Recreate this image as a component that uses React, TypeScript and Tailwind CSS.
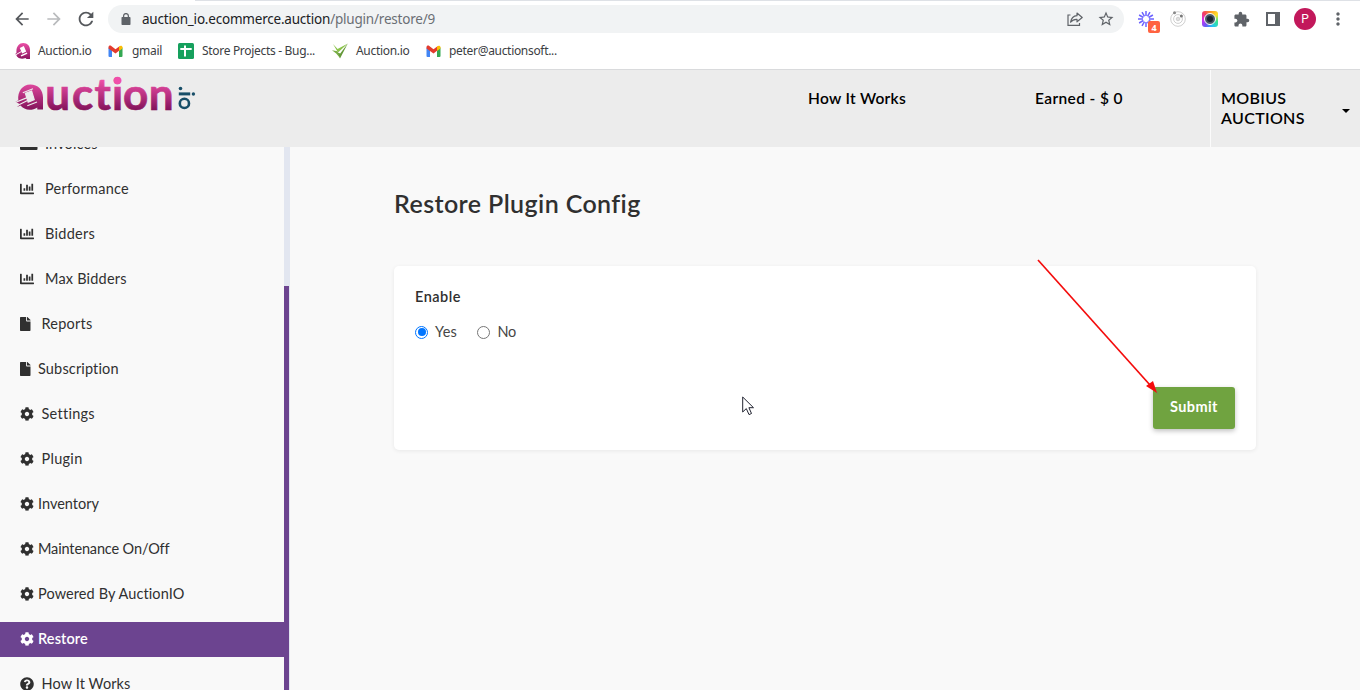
import type { ReactNode } from "react";
import { FaChartBar, FaCog, FaFile, FaQuestionCircle } from "react-icons/fa";
import { MdArrowBack, MdArrowForward, MdExtension, MdMoreVert, MdRefresh, MdStarBorder } from "react-icons/md";

function Gmail() {
  return (
    <svg className="h-[12px] w-[15px] shrink-0" viewBox="0 0 15 12">
      <path d="M0.5 2.5L4 5V12H1.5Q.5 12 .5 11Z" fill="#4285f4" />
      <path d="M11 5L14.5 2.5V11Q14.5 12 13.5 12H11Z" fill="#34a853" />
      <path d="M.5 2.2C.5.5 2.2.2 3.3 1L7.5 4.2L11.5 1.2L11 5.7L7.5 8.5L.5 3.6Z" fill="#e33b2e" />
      <path d="M11 1.5C12.5 .2 14.5.6 14.5 2.3V3.5L11 6Z" fill="#fbbc04" />
    </svg>
  );
}

function AuctionFavicon() {
  return (
    <svg className="h-[16px] w-[16px] shrink-0" viewBox="0 0 16 16">
      <defs>
        <linearGradient id="fav" x1="0" y1="0" x2="0" y2="1">
          <stop offset="0" stopColor="#ec4fa6" />
          <stop offset="1" stopColor="#8d1560" />
        </linearGradient>
      </defs>
      <path d="M8.2 0C12.5 0 15 3 15 7V16H11.5L10.5 15C5.5 17 1.5 14.5 1 11L-.3 11.6L1.5 9.7C.8 4 4 0 8.2 0Z" fill="url(#fav)" />
      <path d="M4.8 4.9L8.8 3.1L11.2 8.6L7.2 10.4Z M5.7 12.2L11.8 9.5L12.4 10.8L6.3 13.5Z M.8 11.2L6 8.3L6.4 9.1L1.3 12Z" fill="#fff" />
    </svg>
  );
}

function LogoArt() {
  return (
    <svg className="block h-[64px] w-[184px]" viewBox="14 70 184 64">
      <defs>
        <linearGradient id="brand" gradientUnits="userSpaceOnUse" x1="0" y1="80" x2="0" y2="110">
          <stop offset="0" stopColor="#ee4fa8" />
          <stop offset="1" stopColor="#83135a" />
        </linearGradient>
      </defs>
      <path d="M30.3 84.5C38 84.5 43 89.6 43 97.5V109.5H37.3V107.4C31.5 111.2 24 110 20.5 105.5L17 107L20 104.2L15.5 101.8L18.3 100.2C17.3 91.5 22.5 84.5 30.3 84.5Z" fill="url(#brand)" />
      <g fill="none" stroke="#ececec" strokeWidth="1.2">
        <path d="M25.4 93.3L31.6 91.1L34.2 99.6L28.2 102.1Z" fill="#ececec" />
        <path d="M22.8 92.7L33 88.8M27.3 105.8L37 102M14.5 102.7L27.2 97.6M17 105.8L28 100.2" />
      </g>
      <text x="45.2 71.9 94.6 112.1 123.1 148.8" y="110" fill="url(#brand)" stroke="url(#brand)" strokeWidth=".7" className="font-['Lato',sans-serif] text-[44px] font-bold">uction</text>
      <circle cx="117.2" cy="80.6" r="3.6" fill="#f04faa" />
      <g fill="#174e68">
        <circle cx="180.5" cy="88.5" r="1.8" />
        <rect x="178.8" y="92.4" width="11.4" height="3" />
        <circle cx="193.4" cy="94" r="1.7" />
      </g>
      <circle cx="184.4" cy="103.4" r="4.6" fill="none" stroke="#174e68" strokeWidth="2.6" />
    </svg>
  );
}

function Bookmark({ icon, className, children }: { icon: ReactNode; className: string; children: ReactNode }) {
  return (
    <div className={"flex items-center whitespace-nowrap " + className}>
      {icon}
      <span>{children}</span>
    </div>
  );
}

function BrowserBar() {
  return (
    <div className="h-[70px] shrink-0 border-b border-[#d9dadc] bg-white font-['Noto_Sans',sans-serif] text-[#3c4043]">
      <div className="ml-[195px] h-px bg-[#dee1e6]" />
      <div className="flex h-[36px] items-center pl-[12px]">
        <MdArrowBack className="size-[20px] text-[#55585c]" />
        <MdArrowForward className="ml-[12px] size-[20px] text-[#b9bbbd]" />
        <MdRefresh className="ml-[11px] size-[22px] text-[#55585c]" />
        <div className="ml-[11px] flex h-[28px] w-[1016px] items-center rounded-full bg-[#f1f3f4] pr-[9px] pl-[13px]">
          <svg className="h-[12px] w-[10px]" viewBox="0 0 10 12">
            <path d="M1.2 4H8.8Q9.5 4 9.5 4.8V11.2Q9.5 12 8.8 12H1.2Q.5 12 .5 11.2V4.8Q.5 4 1.2 4Z" fill="#5f6368" />
            <path d="M2.6 4.5V3A2.4 2.4 0 0 1 7.4 3V4.5" fill="none" stroke="#5f6368" strokeWidth="1.3" />
          </svg>
          <div className="ml-[11px] text-[13.5px] tracking-[-0.207px] whitespace-nowrap text-[#202124]">
            auction_io.ecommerce.auction<span className="text-[#6b6f74]">/plugin/restore/9</span>
          </div>
          <svg className="ml-auto size-[16px]" viewBox="0 0 16 16" fill="none" stroke="#5f6368" strokeWidth="1.2">
            <path d="M3.5 4H1V14.3H12.5V12" />
            <path d="M10 2L15.2 6.5L10 10.8V8.3C7.2 8.1 5.3 9 3.6 11.2C4.2 7.5 6.2 5 10 4.7Z" strokeLinejoin="round" />
          </svg>
          <MdStarBorder className="ml-[14px] size-[18px] text-[#5f6368]" />
        </div>
        <div className="relative ml-[14px] size-[16px]">
          <svg className="size-[16px]" viewBox="-8 -8 16 16" stroke="#6c63ff" strokeWidth="1.5">
            <path d="M0-3V-8M0 3V8M-3 0H-8M3 0H8M1.5-2.6L4-6.9M-1.5-2.6L-4-6.9M2.6-1.5L6.9-4M-2.6-1.5L-6.9-4M1.5 2.6L4 6.9M-1.5 2.6L-4 6.9M2.6 1.5L6.9 4M-2.6 1.5L-6.9 4" />
          </svg>
          <span className="absolute top-[10px] left-[10px] flex h-[12px] w-[12px] items-center justify-center rounded-[2px] bg-[#ff6240] text-[9px] leading-none font-bold text-white">4</span>
        </div>
        <svg className="ml-[16px] size-[16px]" viewBox="0 0 16 16" fill="none" stroke="#cfcfcf">
          <circle cx="8" cy="8" r="7.3" />
          <circle cx="8" cy="8" r="4.4" />
          <circle cx="8" cy="8" r="1.8" fill="#dedede" />
          <circle cx="4.5" cy="1.8" r="1.5" fill="#888" stroke="none" />
          <circle cx="11.4" cy="5" r="1.5" fill="#777" stroke="none" />
        </svg>
        <div className="ml-[16px] flex size-[16px] items-center justify-center rounded-[3px] bg-[conic-gradient(from_-45deg,#f43f5e,#ff9c20,#ffe12b,#37e58f,#22c7f5,#6957f5,#d42cf0,#f43f5e)]">
          <div className="size-[12px] rounded-full border-[1.5px] border-white bg-[#4a5968] p-[2px]">
            <div className="size-full rounded-full bg-[#1b2733]" />
          </div>
        </div>
        <MdExtension className="ml-[15px] size-[17px] text-[#5f6368]" />
        <svg className="ml-[16px] h-[14px] w-[14px]" viewBox="0 0 14 14">
          <path d="M1 1H13V13H1Z" fill="#fff" stroke="#5f6368" strokeWidth="2" />
          <path d="M9 0H14V14H9Z" fill="#5f6368" />
        </svg>
        <div className="ml-[14px] flex size-[22px] items-center justify-center rounded-full bg-[#c2185b] font-['Roboto',sans-serif] text-[12px] text-white">P</div>
        <MdMoreVert className="ml-[12px] size-[20px] text-[#5f6368]" />
      </div>
      <div className="flex h-[28px] items-center pl-[15px] text-[12px] tracking-[-0.31px]">
        <Bookmark icon={<AuctionFavicon />} className="w-[93px] gap-[7px]">Auction.io</Bookmark>
        <Bookmark icon={<Gmail />} className="w-[70px] gap-[9px]">gmail</Bookmark>
        <Bookmark
          className="w-[154px] gap-[8px]"
          icon={
            <svg className="size-[16px] shrink-0" viewBox="0 0 16 16">
              <rect width="16" height="16" rx="1.5" fill="#16a05d" />
              <path d="M2.3 6H13.7M7 2.5V13.5" stroke="#fff" strokeWidth="2" />
            </svg>
          }
        >
          Store Projects - Bug...
        </Bookmark>
        <Bookmark
          className="w-[94px] gap-[8px]"
          icon={
            <svg className="size-[16px] shrink-0" viewBox="0 0 16 16">
              <path d="M1 1L5.6 6L15.8 .5L6 9.4Z" fill="#8bc34a" />
              <path d="M15.8 .5L8 15.6L5 9.2L8.2 10.5Z" fill="#65993a" />
              <path d="M0 7.2L5.5 8.3L8 15L4.2 10.4Z" fill="#78ad45" />
            </svg>
          }
        >
          Auction.io
        </Bookmark>
        <Bookmark icon={<Gmail />} className="gap-[8px]">peter@auctionsoft...</Bookmark>
      </div>
    </div>
  );
}

function SiteHeader() {
  return (
    <header className="flex h-[77px] shrink-0 bg-[#ececec] text-[15.5px] leading-[20px] font-semibold text-black">
      <div className="w-[808px] pl-[14px]"><LogoArt /></div>
      <div className="w-[227px] pt-[18px] tracking-[0.29px]">How It Works</div>
      <div className="w-[175px] pt-[18px] tracking-[0.38px]">Earned - $ 0</div>
      <div className="flex flex-1 border-l border-[#fbfbfb] pl-[10px]">
        <div className="w-[121px] pt-[18px] text-[16px] tracking-[0.32px]">MOBIUS<br />AUCTIONS</div>
        <svg className="mt-[39px] h-[4px] w-[8px]" viewBox="0 0 8 4"><path d="M0 0H8L4 4Z" /></svg>
      </div>
    </header>
  );
}

const menu = [
  { icon: "chart", label: "Performance", text: "pl-[11px] tracking-[0.25px]" },
  { icon: "chart", label: "Bidders", text: "pl-[11px] tracking-[0.27px]" },
  { icon: "chart", label: "Max Bidders", text: "pl-[11px] tracking-[0.2px]" },
  { icon: "file", label: "Reports", text: "pl-[11px] tracking-[0.23px]" },
  { icon: "file", label: "Subscription", text: "pl-[7.5px] tracking-[0.15px]" },
  { icon: "cog", label: "Settings", text: "pl-[7.5px] tracking-[0.27px]" },
  { icon: "cog", label: "Plugin", text: "pl-[7.5px] tracking-[0.29px]" },
  { icon: "cog", label: "Inventory", text: "pl-[4px] tracking-[0.01px]" },
  { icon: "cog", label: "Maintenance On/Off", text: "pl-[4px] tracking-[-0.14px]" },
  { icon: "cog", label: "Powered By AuctionIO", text: "pl-[4px] tracking-[0.1px]" },
  { icon: "cog", label: "Restore", text: "pl-[4px] tracking-[0.1px]", active: true },
  { icon: "help", label: "How It Works", text: "pl-[7.5px] tracking-[0.11px]" },
];

function MenuIcon({ name }: { name: string }) {
  if (name === "chart") return <FaChartBar className="size-[14px] shrink-0" />;
  if (name === "file") return <FaFile className="h-[14px] w-[10.5px] shrink-0" />;
  if (name === "help") return <FaQuestionCircle className="size-[14px] shrink-0" />;
  return <FaCog className="size-[14px] shrink-0" />;
}

function Sidebar() {
  return (
    <aside className="flex w-[290px] shrink-0 overflow-hidden text-[14.5px] text-[#303030]">
      <nav className="-mt-[20px] flex w-[284px] shrink-0 flex-col gap-[10px]">
        <div className="flex h-[35px] shrink-0 items-center pb-[2px] pl-[20px]">
          <svg className="h-[12px] w-[18px]" viewBox="0 0 18 12"><rect width="17.5" height="12" rx="1" fill="#303030" /></svg>
          <span className="pl-[7px] tracking-[0.15px]">Invoices</span>
        </div>
        {menu.map((m) => (
          <div key={m.label} className={m.active ? "flex h-[35px] shrink-0 items-center bg-[#6c4490] pb-[2px] pl-[20px] font-semibold text-white" : "flex h-[35px] shrink-0 items-center pb-[2px] pl-[20px]"}>
            <MenuIcon name={m.icon} />
            <span className={m.text}>{m.label}</span>
          </div>
        ))}
      </nav>
      <div className="w-[6px] bg-[#e2e6f0] pt-[139px]">
        <div className="h-full w-[5px] bg-[#6c4490]" />
      </div>
    </aside>
  );
}

export default function App() {
  return (
    <div className="relative flex h-[690px] w-[1360px] flex-col overflow-hidden bg-[#f9f9f9] font-['Lato',sans-serif] text-[#303030]">
      <BrowserBar />
      <SiteHeader />
      <div className="flex min-h-0 flex-1">
        <Sidebar />
        <main className="flex-1 pr-[104px] pl-[104px]">
          <h1 className="mt-[40px] text-[25px] leading-[32px] font-semibold tracking-[0.4px]">Restore Plugin Config</h1>
          <section className="mt-[47px] flex h-[184px] flex-col rounded-[5px] bg-white px-[21px] shadow-[0_1px_4px_rgba(0,0,0,0.07)]">
            <div className="mt-[21px] text-[14.5px] leading-[20px] font-semibold tracking-[0.5px]">Enable</div>
            <div className="mt-[15px] flex h-[20px] items-center text-[14.5px] text-[#464646]">
              <span className="flex size-[13px] items-center justify-center rounded-full border border-[#0075ff]"><span className="size-[8px] rounded-full bg-[#0075ff]" /></span>
              <span className="w-[49px] pl-[7px] tracking-[0.2px]">Yes</span>
              <span className="size-[13px] rounded-full border border-[#767676]" />
              <span className="pl-[7.5px] tracking-[-0.3px]">No</span>
            </div>
            <button className="mt-[45px] h-[42px] w-[82px] self-end rounded-[3px] bg-[#70a340] pb-[3px] text-[14.5px] font-bold tracking-[0.4px] text-white shadow-[0_2px_5px_rgba(0,0,0,0.25)]">Submit</button>
          </section>
        </main>
      </div>
      <svg className="pointer-events-none absolute top-[255px] left-[1030px] h-[145px] w-[135px]" viewBox="1030 255 135 145">
        <path d="M1148 385L1159 395L1155 388Z" fill="#777" opacity=".6" />
        <path d="M1038 260L1150 385" stroke="#f40c0c" strokeWidth="1.7" />
        <path d="M1146 386L1153 381L1157 393Z" fill="#f40c0c" />
      </svg>
      <svg className="pointer-events-none absolute top-[396px] left-[742px] h-[20px] w-[13px]" viewBox="0 0 13 20">
        <path d="M.7 1V16L4.3 12.6L7 18.6L9.5 17.5L6.9 11.7H11.5Z" fill="#fff" stroke="#222431" />
      </svg>
    </div>
  );
}
